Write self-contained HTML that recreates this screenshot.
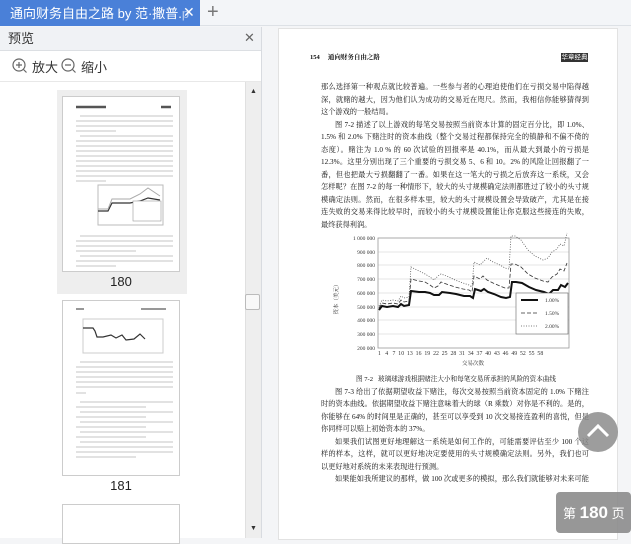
<!DOCTYPE html>
<html><head><meta charset="utf-8"><style>
*{margin:0;padding:0;box-sizing:border-box}
body{width:631px;height:538px;overflow:hidden;background:#f4f5f7;font-family:"Liberation Sans","Noto Sans CJK SC",sans-serif;position:relative}
.a{position:absolute}
.tx{font-family:"Liberation Serif","Noto Serif CJK SC",serif;font-size:7.2px;color:#111;white-space:nowrap}
.tx div{height:12.5px;line-height:12.5px;width:268px;text-align:justify;text-align-last:justify;overflow:hidden}
.tx div.e{text-align-last:left}
.tx div.i{padding-left:14px}
</style></head><body>
<div class="a" style="left:0;top:0;width:631px;height:26px;background:#f3f5f8;border-bottom:1px solid #dde1e6"></div>
<div class="a" style="left:0;top:0;width:200px;height:26px;background:#4a80d8;color:#fff;font-size:13px;line-height:27px;padding-left:10px;white-space:nowrap;overflow:hidden">通向财务自由之路 by 范·撒普.<span style="opacity:.6">p</span></div>
<div class="a" style="left:183px;top:4px;color:#fff;font-size:14px">✕</div>
<div class="a" style="left:207px;top:1px;color:#777;font-size:20px;font-weight:300">+</div>
<div class="a" style="left:0;top:27px;width:262px;height:511px;background:#fff;border-right:1px solid #d8dbe0"></div>
<div class="a" style="left:0;top:27px;width:261px;height:24px;background:#f0f2f5;border-bottom:1px solid #dcdfe3;font-size:13px;line-height:24px;padding-left:8px;color:#333">预览</div>
<div class="a" style="left:244px;top:30px;color:#666;font-size:13px">✕</div>
<div class="a" style="left:0;top:81px;width:261px;height:1px;background:#e8e8e8"></div>
<svg class="a" style="left:12px;top:58px" width="16" height="16"><circle cx="7" cy="7" r="6" fill="none" stroke="#666" stroke-width="1.2"/><path d="M4 7h6M7 4v6M11.5 11.5l3 3" stroke="#666" stroke-width="1.2"/></svg>
<div class="a" style="left:32px;top:57px;font-size:13px;color:#333">放大</div>
<svg class="a" style="left:61px;top:58px" width="16" height="16"><circle cx="7" cy="7" r="6" fill="none" stroke="#666" stroke-width="1.2"/><path d="M4 7h6M11.5 11.5l3 3" stroke="#666" stroke-width="1.2"/></svg>
<div class="a" style="left:81px;top:57px;font-size:13px;color:#333">缩小</div>
<div class="a" style="left:57px;top:90px;width:130px;height:204px;background:#eeeeee"></div>
<div class="a" style="left:62px;top:96px;width:118px;height:176px;background:#fff;border:1px solid #ccc"></div>
<div class="a" style="left:62px;top:274px;width:118px;text-align:center;font-size:13px;color:#222">180</div>
<svg class="a" style="left:63px;top:97px" width="116" height="174">
<path d="M13 10h30M98 10h10" stroke="#555" stroke-width="2.5"/>
<g stroke="#c4c4c4" stroke-width="1.1"><path d="M17 19h93M13 24h97M13 29h97M13 34h40M17 39h93M13 44h97M13 49h97M13 54h97M13 59h97M13 64h97M13 69h97M13 74h97M13 79h97M13 84h30M17 139h93M13 144h97M13 149h97M13 154h60M17 159h93M13 164h97M13 169h40"/></g>
<rect x="35" y="88" width="65" height="40" fill="none" stroke="#bbb"/><path d="M35 114l10 0 4-8 18 0 10-2 8-3 12 2" stroke="#333" fill="none" stroke-width="1.2"/><path d="M35 112l10 0 4-10 18 0 10-5 8-6 12 8" stroke="#aaa" fill="none"/>
<rect x="70" y="104" width="28" height="20" fill="#fff" stroke="#999" stroke-width=".6"/>
</svg>
<div class="a" style="left:62px;top:300px;width:118px;height:176px;background:#fff;border:1px solid #ccc"></div>
<svg class="a" style="left:63px;top:301px" width="116" height="174">
<path d="M13 8h8M78 8h25" stroke="#777" stroke-width="1.5"/>
<rect x="20" y="18" width="80" height="34" fill="none" stroke="#ccc"/><path d="M20 27h10l2 3 2 6 6 0 8-2 5 3 6-3 4 5 8-1 6-5 5 5" stroke="#333" fill="none" stroke-width="1.2"/>
<g stroke="#c4c4c4" stroke-width="1.1"><path d="M17 61h93M13 66h97M13 71h97M13 76h97M13 81h97M13 86h97M13 92h10M17 101h93M13 106h70M17 111h93M13 116h70M17 121h93M13 126h70M17 131h93M13 136h70M17 141h93M13 146h97M13 151h97M13 156h60"/></g></svg>
<div class="a" style="left:62px;top:478px;width:118px;text-align:center;font-size:13px;color:#222">181</div>
<div class="a" style="left:62px;top:504px;width:118px;height:40px;background:#fff;border:1px solid #ccc"></div>
<div class="a" style="left:245px;top:82px;width:16px;height:456px;background:#eeeeee;border-left:1px solid #e0e0e0"></div>
<div class="a" style="left:250px;top:88px;font-size:7px;color:#333">▲</div>
<div class="a" style="left:245px;top:294px;width:15px;height:16px;background:#f8f8f8;border:1px solid #bbb;border-radius:2px"></div>
<div class="a" style="left:250px;top:525px;font-size:7px;color:#333">▼</div>
<div class="a" style="left:278px;top:28px;width:340px;height:512px;background:#fff;border:1px solid #e2e2e2"></div>
<div class="a" style="left:618px;top:27px;width:13px;height:511px;background:#f4f5f7"></div>
<div class="a tx" style="left:310px;top:52px;font-size:6.5px;font-weight:bold">154&nbsp;&nbsp;&nbsp;&nbsp;&nbsp;通向财务自由之路</div>
<div class="a" style="left:561px;top:53px;width:27px;height:9px;background:#333;color:#fff;font-size:6.5px;line-height:9px;text-align:center">华章经典</div>
<div class="a tx" style="left:321px;top:81px">
<div>那么选择第一种观点就比较普遍。一些参与者的心理迫使他们在亏损交易中陷得越</div>
<div>深，就赌的越大，因为他们认为成功的交易近在咫尺。然而，我相信你能够猜得到</div>
<div class="e">这个游戏的一般结局。</div>
<div class="i">图 7-2 描述了以上游戏的每笔交易按照当前资本计算的固定百分比，即 1.0%、</div>
<div>1.5% 和 2.0% 下赌注时的资本曲线（整个交易过程都保持完全的镇静和不偏不倚的</div>
<div>态度）。赌注为 1.0 % 的 60 次试验的回报率是 40.1%，而从最大到最小的亏损是</div>
<div>12.3%。这里分别出现了三个重要的亏损交易 5、6 和 10。2% 的风险让回报翻了一</div>
<div>番，但也把最大亏损翻翻了一番。如果在这一笔大的亏损之后放弃这一系统，又会</div>
<div>怎样呢？在图 7-2 的每一种情形下，较大的头寸规模确定法则都胜过了较小的头寸规</div>
<div>模确定法则。然而，在很多样本里，较大的头寸规模设置会导致破产，尤其是在接</div>
<div>连失败的交易来得比较早时，而较小的头寸规模设置能让你克服这些接连的失败，</div>
<div class="e">最终获得利润。</div>
</div>
<svg class="a" style="left:330px;top:228px" width="260" height="140" font-family="Liberation Serif" font-size="5.5" fill="#333">
<g stroke="#ccc" stroke-width=".6"><path d="M48 10h191M48 24h191M48 37h191M48 51h191M48 65h191M48 79h191M48 92h191M48 106h191"/></g>
<rect x="48" y="10" width="191" height="110" fill="none" stroke="#999" stroke-width=".8"/>
<g text-anchor="end"><text x="45" y="12">1 000 000</text><text x="45" y="26">900 000</text><text x="45" y="39">800 000</text><text x="45" y="53">700 000</text><text x="45" y="67">600 000</text><text x="45" y="81">500 000</text><text x="45" y="94">400 000</text><text x="45" y="108">300 000</text><text x="45" y="122">200 000</text></g>
<text x="8" y="70" transform="rotate(-90 8 70)" text-anchor="middle" font-family="Noto Serif CJK SC">资本（美元）</text>
<path d="M49 82l3-4 5 1 6-1 5 1 3-3 3 2 5-1 2-14 8 1 6 0 5 1 4 2 5 0 3-3 8 1 6 1 8 2 6 0 3 2 2-9 6 2 3-2 4 3 6 2 7 3 5 1 4-1 2-15 4 0 6 1 7 4 7 3 8 2 5 2 4-4 5 0 3-5 4 2 3-4" fill="none" stroke="#111" stroke-width="2"/>
<path d="M49 80l3-5 5 1 6-1 5 1 3-4 3 2 5-1 2-22 8 2 6 1 5 3 4 3 4-2 3-4 8 3 6 2 8 2 6 1 3 2 2-16 6 3 3-3 4 4 6 3 7 3 5 2 4 0 2-24 4 0 6 3 7 7 7 4 8 3 5 1 4-5 5-3 3-5 4 2 3-8" fill="none" stroke="#333" stroke-width=".8" stroke-dasharray="4 2"/>
<path d="M49 78l3-6 5 1 6-1 5 1 3-5 3 2 5-1 2-30 8 4 6 3 5 3 4 3 4-4 3-2 8 3 6 3 8 3 6 2 3 2 2-25 6 3 3-3 4-4 6 4 7 3 5 3 4 1 2-33 4 0 6 4 7 10 7 6 8 4 5-2 4-6 5-3 3-5 4 2 3-13" fill="none" stroke="#555" stroke-width=".8" stroke-dasharray="1 1.5"/>
<rect x="186" y="65" width="52" height="41" fill="#fff" stroke="#666" stroke-width=".6"/>
<path d="M191 72h17" stroke="#111" stroke-width="2"/><text x="215" y="74">1.00%</text>
<path d="M191 85h17" stroke="#333" stroke-width=".8" stroke-dasharray="4 2"/><text x="215" y="87">1.50%</text>
<path d="M191 98h17" stroke="#555" stroke-width=".8" stroke-dasharray="1 1.5"/><text x="215" y="100">2.00%</text>
<text x="48" y="127" font-size="5.8">1 &#160;&#160;4 &#160;&#160;7 &#160;10 &#160;13 &#160;16 &#160;19 &#160;22 &#160;25 &#160;28 &#160;31 &#160;34 &#160;37 &#160;40 &#160;43 &#160;46 &#160;49 &#160;52 &#160;55 &#160;58</text>
<text x="143" y="137" text-anchor="middle" font-family="Noto Serif CJK SC">交易次数</text>
</svg>
<div class="a tx" style="left:356px;top:373px;font-size:6.6px">图 7-2&nbsp;&nbsp;&nbsp;玻璃球游戏根据赌注大小和每笔交易所承担的风险的资本曲线</div>
<div class="a tx" style="left:321px;top:385.5px">
<div class="i">图 7-3 给出了依据期望收益下赌注，每次交易按照当前资本固定的 1.0% 下赌注</div>
<div>时的资本曲线。依据期望收益下赌注意味着大的球（R 乘数）对你是不利的。是的，</div>
<div>你能够在 64% 的时间里是正确的，甚至可以享受到 10 次交易接连盈利的喜悦，但是</div>
<div class="e">你同样可以赔上初始资本的 37%。</div>
<div class="i">如果我们试图更好地理解这一系统是如何工作的，可能需要评估至少 100 个这</div>
<div>样的样本，这样，就可以更好地决定要使用的头寸规模确定法则。另外，我们也可</div>
<div class="e">以更好地对系统的未来表现进行预测。</div>
<div class="i">如果能如我所建议的那样，做 100 次或更多的模拟，那么我们就能够对未来可能</div>
</div>
<div class="a" style="left:578px;top:412px;width:40px;height:40px;border-radius:50%;background:rgba(140,140,140,.85)"></div>
<svg class="a" style="left:578px;top:412px" width="40" height="40"><path d="M10 24l10-10 10 10" fill="none" stroke="#fff" stroke-width="3"/></svg>
<div class="a" style="left:556px;top:492px;width:75px;height:41px;border-radius:4px;background:rgba(140,140,140,.9);color:#fff;font-size:13px;line-height:41px;padding-left:7px;white-space:nowrap;overflow:hidden">第 <b style="font-size:17px">180</b> 页</div>
</body></html>
